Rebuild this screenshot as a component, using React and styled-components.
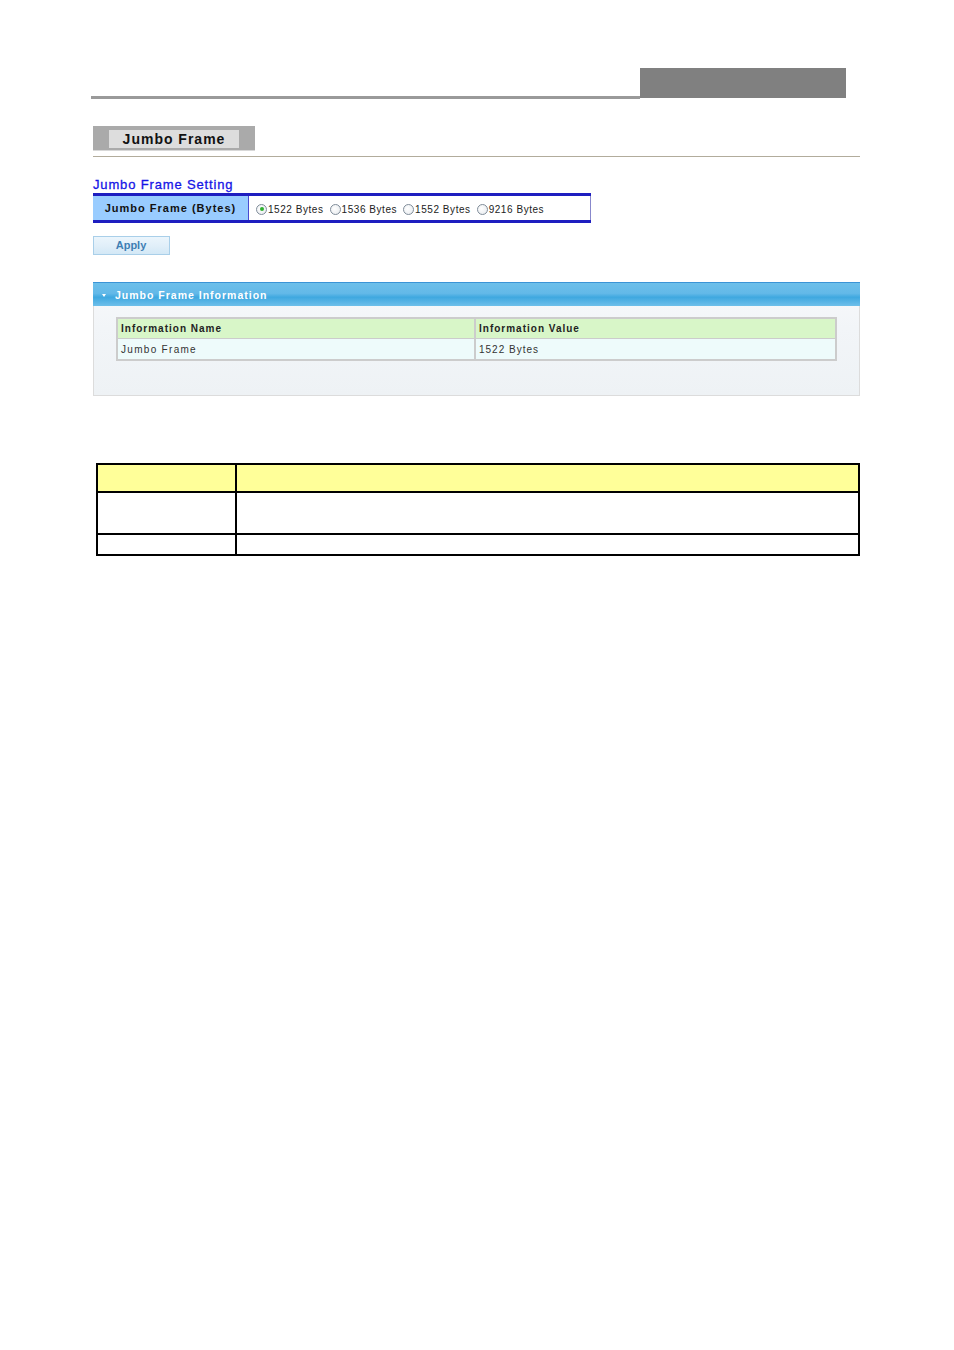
import React from "react";
import styled, { createGlobalStyle } from "styled-components";

const Global = createGlobalStyle`
  html, body { margin: 0; padding: 0; background: #fff; }
  body { font-family: "Liberation Sans", Arial, sans-serif; }
`;

const Page = styled.div`
  width: 954px;
  height: 1350px;
  position: relative;
  box-sizing: border-box;
  padding-top: 68px;
`;

const TopBar = styled.div`
  display: flex;
  align-items: flex-start;
  margin-left: 91px;
  width: 755px;
`;

const TopLine = styled.div`
  flex: 0 0 549px;
  height: 3px;
  margin-top: 28px;
  background: #9a9a9a;
`;

const TopBox = styled.div`
  flex: 0 0 206px;
  height: 30px;
  background: #808080;
`;

const Content = styled.div`
  margin-left: 93px;
  width: 767px;
`;

const Tab = styled.div`
  margin-top: 27px;
  width: 162px;
  height: 25px;
  box-sizing: border-box;
  background: #aaaaaa;
  padding: 4px 16px 3px 16px;
  border-bottom: 1px solid #d8d8d8;
`;

const TabInner = styled.div`
  width: 130px;
  height: 18px;
  background: #dddddd;
  font-weight: bold;
  font-size: 14px;
  letter-spacing: 1px;
  line-height: 18px;
  text-align: center;
  color: #111;
`;

const Rule = styled.div`
  margin-top: 5px;
  height: 1px;
  background: #b2ac9c;
`;

const SectionTitle = styled.div`
  margin-top: 20px;
  height: 16px;
  font-size: 13px;
  letter-spacing: 0.85px;
  color: #1515e6;
  line-height: 15px;
  font-weight: normal;
  -webkit-text-stroke: 0.3px #1515e6;
`;

const SettingTable = styled.div`
  display: flex;
  width: 498px;
  height: 30px;
  box-sizing: border-box;
  border-top: 3px solid #1e1ec0;
  border-bottom: 3px solid #1e1ec0;
`;

const SettingLabel = styled.div`
  flex: 0 0 156px;
  background: #99ccff;
  border-right: 1px solid #4a4ad0;
  box-sizing: border-box;
  font-size: 11px;
  font-weight: bold;
  letter-spacing: 1px;
  color: #111;
  display: flex;
  align-items: center;
  justify-content: center;
`;

const SettingValue = styled.div`
  flex: 1;
  display: flex;
  align-items: center;
  padding-left: 7px;
  gap: 6px;
  border-right: 1px solid #8888cc;
  background: #fff;
`;

const RadioItem = styled.label`
  display: flex;
  align-items: center;
  font-size: 10px;
  letter-spacing: 0.55px;
  color: #222;
  gap: 1px;
  margin-top: 2px;
`;

const RadioCircle = styled.span`
  width: 9px;
  height: 9px;
  border-radius: 50%;
  border: 1px solid #7f8c99;
  background: radial-gradient(circle at 40% 40%, #ffffff 0%, #e4e8ec 100%);
  display: inline-flex;
  align-items: center;
  justify-content: center;
  box-sizing: content-box;
  &::after {
    content: "";
    width: 4px;
    height: 4px;
    border-radius: 50%;
    background: ${(p) => (p.$checked ? "#2fb02f" : "transparent")};
  }
`;

const ApplyButton = styled.div`
  margin-top: 13px;
  width: 77px;
  height: 19px;
  box-sizing: border-box;
  border: 1px solid #a9cfe9;
  background: linear-gradient(#ebf5fc 0%, #e1eff9 50%, #d3e8f6 100%);
  font-size: 11px;
  font-weight: bold;
  color: #3f7fb4;
  text-align: center;
  line-height: 17px;
  padding-right: 1px;
`;

const Panel = styled.div`
  margin-top: 27px;
  height: 114px;
  box-sizing: border-box;
  border: 1px solid #dcdcdc;
  border-top: none;
  background: linear-gradient(#f8f9fb 0%, #f2f5f8 40%, #eef2f5 100%);
`;

const PanelHeader = styled.div`
  height: 24px;
  box-sizing: border-box;
  border-top: 1px solid #3b94d6;
  background: linear-gradient(
    #6cbfea 0%,
    #63b9e8 45%,
    #3fa8e0 62%,
    #6ebfea 100%
  );
  display: flex;
  align-items: center;
  padding-left: 9px;
  color: #fff;
  font-size: 10.5px;
  font-weight: bold;
  letter-spacing: 1px;
  margin: 0 -1px;
`;

const Arrow = styled.span`
  display: inline-block;
  width: 0;
  height: 0;
  border-left: 2.5px solid transparent;
  border-right: 2.5px solid transparent;
  border-top: 3px solid #fff;
  margin-right: 9px;
  margin-top: 1px;
`;

const InfoTable = styled.div`
  margin: 11px 22px 0 22px;
  border: 2px solid #cccccc;
`;

const InfoRow = styled.div`
  display: grid;
  grid-template-columns: 356px 1fr;
  height: ${(p) => (p.$head ? "19px" : "20px")};
  background: ${(p) => (p.$head ? "#d8f6c8" : "#eefbfb")};
  border-top: ${(p) => (p.$head ? "none" : "1px solid #cccccc")};
`;

const InfoCell = styled.div`
  font-size: 10px;
  letter-spacing: 1px;
  font-weight: ${(p) => (p.$head ? "bold" : "normal")};
  color: ${(p) => (p.$head ? "#222" : "#333")};
  padding-left: 3px;
  display: flex;
  align-items: center;
  border-left: ${(p) => (p.$first ? "none" : "2px solid #cccccc")};
  ${(p) => (!p.$head && p.$first ? "letter-spacing: 1.3px;" : "")}
`;

const DocTable = styled.div`
  margin-top: 67px;
  margin-left: 3px;
  width: 764px;
  box-sizing: border-box;
  border: 2px solid #000;
`;

const DocRow = styled.div`
  display: grid;
  grid-template-columns: 137px 1fr;
  height: ${(p) => p.$h}px;
  background: ${(p) => (p.$head ? "#ffff99" : "#fff")};
  border-top: ${(p) => (p.$head ? "none" : "2px solid #000")};
  box-sizing: border-box;
`;

const DocCell = styled.div`
  border-left: ${(p) => (p.$first ? "none" : "2px solid #000")};
`;

const options = ["1522 Bytes", "1536 Bytes", "1552 Bytes", "9216 Bytes"];

export default function App() {
  return (
    <Page>
      <Global />
      <TopBar>
        <TopLine />
        <TopBox />
      </TopBar>
      <Content>
        <Tab>
          <TabInner>Jumbo Frame</TabInner>
        </Tab>
        <Rule />
        <SectionTitle>Jumbo Frame Setting</SectionTitle>
        <SettingTable>
          <SettingLabel>Jumbo Frame (Bytes)</SettingLabel>
          <SettingValue>
            {options.map((o, i) => (
              <RadioItem key={o}>
                <RadioCircle $checked={i === 0} />
                {o}
              </RadioItem>
            ))}
          </SettingValue>
        </SettingTable>
        <ApplyButton>Apply</ApplyButton>
        <Panel>
          <PanelHeader>
            <Arrow />
            Jumbo Frame Information
          </PanelHeader>
          <InfoTable>
            <InfoRow $head>
              <InfoCell $head $first>Information Name</InfoCell>
              <InfoCell $head>Information Value</InfoCell>
            </InfoRow>
            <InfoRow>
              <InfoCell $first>Jumbo Frame</InfoCell>
              <InfoCell>1522 Bytes</InfoCell>
            </InfoRow>
          </InfoTable>
        </Panel>
        <DocTable>
          <DocRow $head $h={26}>
            <DocCell $first />
            <DocCell />
          </DocRow>
          <DocRow $h={42}>
            <DocCell $first />
            <DocCell />
          </DocRow>
          <DocRow $h={21}>
            <DocCell $first />
            <DocCell />
          </DocRow>
        </DocTable>
      </Content>
    </Page>
  );
}
